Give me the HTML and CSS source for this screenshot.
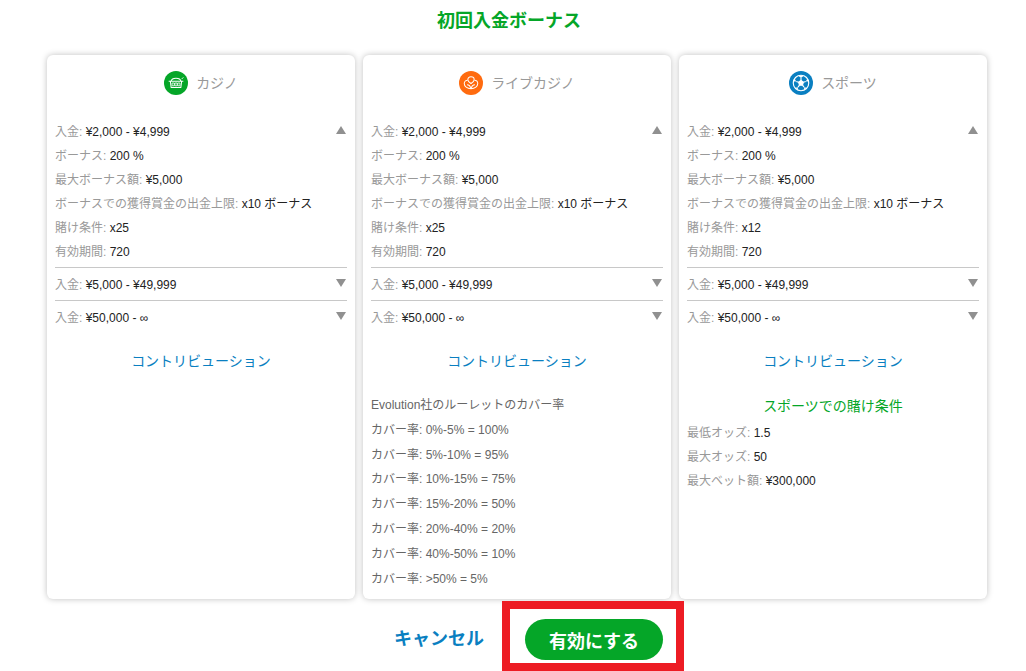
FILE: index.html
```html
<!DOCTYPE html>
<html lang="ja">
<head>
<meta charset="utf-8">
<title>初回入金ボーナス</title>
<link rel="stylesheet" href="styles.css">
</head>
<body>
<h1 class="title">初回入金ボーナス</h1>
<main class="cards">
  <section class="card">
    <header class="card-head">
      <span class="badge badge-green">
        <svg viewBox="0 0 16 16" width="18" height="18" fill="none" stroke="#fff" stroke-width=".9"><path d="M1.500 6.500h13M3 6.500l.7 5.500h8.600l.7-5.500M3.500 6.500C4 4.500 6 3.800 8 3.800s4 .7 4.500 2.700"/><path d="M4.500 8h2v2.500h-2zM7 8h2v2.500H7zM9.500 8h2v2.500h-2z" stroke-width=".7"/><path d="M13 4.500l1.500-1.500" stroke-width=".8"/></svg>
      </span>
      <span class="card-name">カジノ</span>
    </header>
    <div class="tier tier-open">
      <div class="tier-rows">
        <p class="row"><span class="lbl">入金:</span> ¥2,000 - ¥4,999</p>
        <p class="row"><span class="lbl">ボーナス:</span> 200 %</p>
        <p class="row"><span class="lbl">最大ボーナス額:</span> ¥5,000</p>
        <p class="row"><span class="lbl">ボーナスでの獲得賞金の出金上限:</span> x10 ボーナス</p>
        <p class="row"><span class="lbl">賭け条件:</span> x25</p>
        <p class="row"><span class="lbl">有効期間:</span> 720</p>
      </div>
      <span class="arrow arrow-up"></span>
    </div>
    <div class="tier"><p class="row"><span class="lbl">入金:</span> ¥5,000 - ¥49,999</p><span class="arrow arrow-down"></span></div>
    <div class="tier tier-last"><p class="row"><span class="lbl">入金:</span> ¥50,000 - ∞</p><span class="arrow arrow-down"></span></div>
    <a class="contrib">コントリビューション</a>
  </section>

  <section class="card">
    <header class="card-head">
      <span class="badge badge-orange">
        <svg viewBox="0 0 16 16" width="18" height="18" fill="none" stroke="#fff" stroke-width=".9"><path d="M8 2.500c1.800 0 2.800 1.200 2.800 2.500 0 1.500-1.500 2.500-2.800 3.500C6.700 7.500 5.200 6.500 5.200 5c0-1.300 1-2.500 2.800-2.500z"/><path d="M5 5.500C3.500 5.500 2 6.500 2 8.500c0 2.500 2.500 4.500 6 4.500s6-2 6-4.500c0-2-1.500-3-3-3"/><path d="M4.500 9.500c1.500 0 2.800.6 3.500 3.500.7-2.900 2-3.500 3.500-3.500"/></svg>
      </span>
      <span class="card-name">ライブカジノ</span>
    </header>
    <div class="tier tier-open">
      <div class="tier-rows">
        <p class="row"><span class="lbl">入金:</span> ¥2,000 - ¥4,999</p>
        <p class="row"><span class="lbl">ボーナス:</span> 200 %</p>
        <p class="row"><span class="lbl">最大ボーナス額:</span> ¥5,000</p>
        <p class="row"><span class="lbl">ボーナスでの獲得賞金の出金上限:</span> x10 ボーナス</p>
        <p class="row"><span class="lbl">賭け条件:</span> x25</p>
        <p class="row"><span class="lbl">有効期間:</span> 720</p>
      </div>
      <span class="arrow arrow-up"></span>
    </div>
    <div class="tier"><p class="row"><span class="lbl">入金:</span> ¥5,000 - ¥49,999</p><span class="arrow arrow-down"></span></div>
    <div class="tier tier-last"><p class="row"><span class="lbl">入金:</span> ¥50,000 - ∞</p><span class="arrow arrow-down"></span></div>
    <a class="contrib">コントリビューション</a>
    <div class="coverage">
      <p>Evolution社のルーレットのカバー率</p>
      <p>カバー率: 0%-5% = 100%</p>
      <p>カバー率: 5%-10% = 95%</p>
      <p>カバー率: 10%-15% = 75%</p>
      <p>カバー率: 15%-20% = 50%</p>
      <p>カバー率: 20%-40% = 20%</p>
      <p>カバー率: 40%-50% = 10%</p>
      <p>カバー率: &gt;50% = 5%</p>
    </div>
  </section>

  <section class="card">
    <header class="card-head">
      <span class="badge badge-blue">
        <svg viewBox="0 0 16 16" width="20" height="20" fill="none" stroke="#fff" stroke-width=".9"><circle cx="8" cy="8" r="6.200"/><path d="M8 6l1.900 1.400-.7 2.300H6.800l-.7-2.300z" fill="#fff"/><path d="M8 6V4M9.900 7.400l1.900-.6M9.200 9.700l1.200 1.600M6.800 9.700l-1.200 1.600M6.100 7.400l-1.900-.6"/><path d="M6 2.400L8 4l2-1.600-2-.6zM11.800 6.800l2.200-.3-.8-2.100zM10.400 11.300l.2 2 1.900-1.500zM5.600 11.300l-.2 2-1.900-1.500zM4.200 6.800L2 6.500l.8-2.100z" fill="#fff" stroke="none"/></svg>
      </span>
      <span class="card-name">スポーツ</span>
    </header>
    <div class="tier tier-open">
      <div class="tier-rows">
        <p class="row"><span class="lbl">入金:</span> ¥2,000 - ¥4,999</p>
        <p class="row"><span class="lbl">ボーナス:</span> 200 %</p>
        <p class="row"><span class="lbl">最大ボーナス額:</span> ¥5,000</p>
        <p class="row"><span class="lbl">ボーナスでの獲得賞金の出金上限:</span> x10 ボーナス</p>
        <p class="row"><span class="lbl">賭け条件:</span> x12</p>
        <p class="row"><span class="lbl">有効期間:</span> 720</p>
      </div>
      <span class="arrow arrow-up"></span>
    </div>
    <div class="tier"><p class="row"><span class="lbl">入金:</span> ¥5,000 - ¥49,999</p><span class="arrow arrow-down"></span></div>
    <div class="tier tier-last"><p class="row"><span class="lbl">入金:</span> ¥50,000 - ∞</p><span class="arrow arrow-down"></span></div>
    <a class="contrib">コントリビューション</a>
    <h2 class="sports-title">スポーツでの賭け条件</h2>
    <div class="sports-rows">
      <p class="row"><span class="lbl">最低オッズ:</span> 1.5</p>
      <p class="row"><span class="lbl">最大オッズ:</span> 50</p>
      <p class="row"><span class="lbl">最大ベット額:</span> ¥300,000</p>
    </div>
  </section>
</main>
<footer class="actions">
  <a class="cancel">キャンセル</a>
  <div class="highlight"><button class="activate" type="button">有効にする</button></div>
</footer>
</body>
</html>
```
FILE: styles.css
```css
* { box-sizing: border-box; }
html, body { margin: 0; padding: 0; }
body {
  width: 1026px;
  height: 671px;
  overflow: hidden;
  background: #fff;
  font-family: "Liberation Sans", "Noto Sans CJK JP", sans-serif;
  font-size: 12px;
  color: #222;
}
p { margin: 0; }
.title {
  margin: 0 0 15px;
  padding-right: 8px;
  height: 40px;
  line-height: 42px;
  text-align: center;
  font-size: 18px;
  font-weight: 700;
  color: #05a628;
}
.cards {
  display: grid;
  grid-template-columns: repeat(3, 308px);
  gap: 8px;
  padding-left: 47px;
}
.card {
  background: #fff;
  border-radius: 6px;
  box-shadow: 0 0 6px rgba(0, 0, 0, .25);
  padding: 0 8px 9px;
}
.card-head {
  height: 56px;
  margin-bottom: 8px;
  display: flex;
  align-items: center;
  justify-content: center;
  gap: 8px;
}
.badge {
  width: 24px;
  height: 24px;
  border-radius: 50%;
  display: flex;
  align-items: center;
  justify-content: center;
}
.badge-green { background: #05a628; }
.badge-orange { background: #ff6b0f; }
.badge-blue { background: #0a7fc1; }
.card-name { font-size: 14px; line-height: 24px; color: #999; }
.row { height: 24px; line-height: 26px; white-space: nowrap; }
.lbl { color: #999; }
.tier {
  padding: 4px 0;
  border-bottom: 1px solid #c8c8c8;
  display: flex;
  justify-content: space-between;
}
.tier-last { border-bottom: 0; padding-bottom: 0; }
.tier-open { padding-top: 0; }
.arrow {
  width: 0;
  height: 0;
  margin: 7px 1px 0 0;
  border-left: 5px solid transparent;
  border-right: 5px solid transparent;
}
.arrow-up { border-bottom: 8px solid #909090; }
.arrow-down { border-top: 8px solid #909090; }
.contrib {
  display: block;
  margin-top: 19px;
  height: 24px;
  line-height: 26px;
  text-align: center;
  font-size: 14px;
  color: #0a7fc1;
}
.coverage { margin-top: 20px; color: #666; }
.coverage p { height: 24.8px; line-height: 26.8px; white-space: nowrap; }
.sports-title {
  margin: 21px 0 3px;
  height: 24px;
  line-height: 26px;
  text-align: center;
  font-size: 14px;
  font-weight: 400;
  color: #05a628;
}
.actions {
  display: flex;
  align-items: center;
  margin-top: 2px;
  padding-left: 394px;
}
.cancel {
  font-size: 18px;
  line-height: 28px;
  padding-top: 6px;
  font-weight: 700;
  color: #0a7fc1;
  margin-right: 18px;
}
.highlight {
  width: 182px;
  height: 70px;
  border: 8px solid #ed1c24;
  padding: 10px 15px 3px;
  display: flex;
  flex-shrink: 0;
}
.activate {
  flex: 0 0 138px;
  height: 41px;
  border: 0;
  border-radius: 21px;
  background: #05a628;
  color: #fff;
  font-family: inherit;
  font-size: 18px;
  font-weight: 700;
  padding: 0;
}
```
